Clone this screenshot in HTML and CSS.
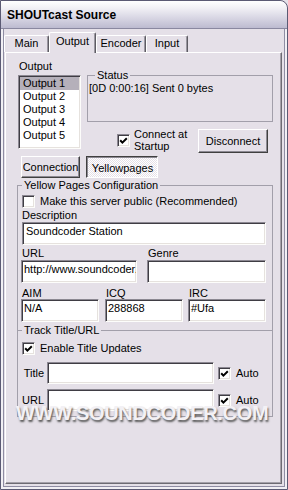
FILE: index.html
```html
<!DOCTYPE html>
<html>
<head>
<meta charset="utf-8">
<link rel="stylesheet" href="styles.css">
</head>
<body>
<div class="window">
  <div class="titlebar">SHOUTcast Source</div>
  <div class="body">
    <div class="tabs">
      <div class="tab t-main">Main</div>
      <div class="tab tab-active t-out">Output</div>
      <div class="tab t-enc">Encoder</div>
      <div class="tab t-in">Input</div>
    </div>
    <div class="panel">
      <div class="top">
        <div class="outcol">
          <div class="lbl">Output</div>
          <div class="list field">
            <div class="item sel">Output 1</div>
            <div class="item">Output 2</div>
            <div class="item">Output 3</div>
            <div class="item">Output 4</div>
            <div class="item">Output 5</div>
          </div>
        </div>
        <div class="rcol">
          <fieldset class="group status">
            <legend>Status</legend>
            <div class="stext">[0D 0:00:16] Sent 0 bytes</div>
          </fieldset>
          <div class="connrow">
            <span class="cb"><svg viewBox="0 0 9 9" width="9" height="9"><polyline points="1.2,4.2 3.4,6.6 7.8,2.2" fill="none" stroke="#000" stroke-width="2"/></svg></span>
            <span class="cbtext">Connect at<br>Startup</span>
            <div class="btn disc">Disconnect</div>
          </div>
        </div>
      </div>
      <div class="subtabs">
        <div class="btn conn">Connection</div>
        <div class="btn pressed yp">Yellowpages</div>
      </div>
      <fieldset class="group ypgroup">
        <legend>Yellow Pages Configuration</legend>
        <div class="ckrow">
          <span class="cb"></span>
          <span class="cklbl">Make this server public (Recommended)</span>
        </div>
        <div class="flbl">Description</div>
        <div class="field fin desc">Soundcoder Station</div>
        <div class="row2">
          <div class="col c-url">
            <div class="clbl">URL</div>
            <div class="field fin">http://www.soundcoder.com</div>
          </div>
          <div class="col c-genre">
            <div class="clbl">Genre</div>
            <div class="field fin"></div>
          </div>
        </div>
        <div class="row3">
          <div class="col c-aim">
            <div class="clbl">AIM</div>
            <div class="field fin">N/A</div>
          </div>
          <div class="col c-icq">
            <div class="clbl">ICQ</div>
            <div class="field fin">288868</div>
          </div>
          <div class="col c-irc">
            <div class="clbl">IRC</div>
            <div class="field fin">#Ufa</div>
          </div>
        </div>
      </fieldset>
      <fieldset class="group track">
        <legend>Track Title/URL</legend>
        <div class="ckrow ck2">
          <span class="cb"><svg viewBox="0 0 9 9" width="9" height="9"><polyline points="1.2,4.2 3.4,6.6 7.8,2.2" fill="none" stroke="#000" stroke-width="2"/></svg></span>
          <span class="cklbl">Enable Title Updates</span>
        </div>
        <div class="trow">
          <span class="tlbl">Title</span>
          <div class="field tin"></div>
          <span class="cb"><svg viewBox="0 0 9 9" width="9" height="9"><polyline points="1.2,4.2 3.4,6.6 7.8,2.2" fill="none" stroke="#000" stroke-width="2"/></svg></span>
          <span class="auto">Auto</span>
        </div>
        <div class="trow trow2">
          <span class="tlbl">URL</span>
          <div class="field tin"></div>
          <span class="cb"><svg viewBox="0 0 9 9" width="9" height="9"><polyline points="1.2,4.2 3.4,6.6 7.8,2.2" fill="none" stroke="#000" stroke-width="2"/></svg></span>
          <span class="auto">Auto</span>
        </div>
      </fieldset>
    </div>
  </div>
  <div class="watermark">WWW.SOUNDCODER.COM</div>
</div>
</body>
</html>
```
FILE: styles.css
```css
html, body {
  margin: 0;
  padding: 0;
  background: #e5e0e8;
}
body {
  font-family: "Liberation Sans", Arial, sans-serif;
  font-size: 11px;
  color: #000;
  overflow: hidden;
}
.window {
  position: relative;
  box-sizing: border-box;
  width: 288px;
  height: 490px;
  border: 1px solid #5b5a74;
  border-top-right-radius: 8px;
  background: #e5e0e8;
  box-shadow: inset 0 0 0 2px #f1eff4, inset 0 0 0 3px #8f8da3;
  overflow: hidden;
}
.titlebar {
  box-sizing: border-box;
  height: 28px;
  border-bottom: 1px solid #8a88a0;
  padding: 2px 0 0 6px;
  line-height: 25px;
  font-weight: bold;
  font-size: 12px;
  background: linear-gradient(#ffffff, #f2f1f6 25%, #dad8e5 60%, #bdbbd0);
  border-top-right-radius: 7px;
}
.body {
  padding: 3px 0 0 3px;
}
.tabs {
  display: flex;
  align-items: flex-end;
  height: 20px;
}
.tab {
  box-sizing: border-box;
  height: 17px;
  border: 1px solid #fff;
  border-bottom: none;
  border-right-color: #5e5c63;
  box-shadow: inset -1px 0 #9a97a0;
  border-radius: 2px 2px 0 0;
  text-align: center;
  line-height: 15px;
}
.tab-active {
  position: relative;
  z-index: 1;
  height: 21px;
  margin-bottom: -1px;
  background: #e5e0e8;
  line-height: 17px;
}
.t-main { width: 45px; }
.t-out { width: 47px; }
.t-enc { width: 50px; }
.t-in { width: 42px; }

.panel {
  box-sizing: border-box;
  margin-left: 1px;
  width: 277px;
  height: 432px;
  border-top: 1px solid #fff;
  border-left: 1px solid #fff;
  border-right: 1px solid #6d6b73;
  border-bottom: 1px solid #6d6b73;
  box-shadow: inset -1px -1px #a5a1aa;
  padding-top: 7px;
}
.top {
  display: flex;
  align-items: flex-start;
}
.outcol {
  margin-left: 12px;
  width: 63px;
}
.lbl {
  height: 12px;
  line-height: 12px;
  padding-left: 1px;
}
.field {
  box-sizing: border-box;
  background: #fff;
  border: 1px solid;
  border-color: #8c8892 #fdfdfb #fdfdfb #8c8892;
  box-shadow: inset 1px 1px #3f3d44, inset -1px -1px #e6e2de;
  white-space: nowrap;
  overflow: hidden;
}
.list {
  margin-top: 3px;
  height: 74px;
  padding: 1px;
}
.item {
  line-height: 13px;
  padding-left: 3px;
}
.sel {
  background: #b5b0ba;
}
.rcol {
  margin-left: 6px;
  margin-top: 9px;
  width: 186px;
}
fieldset.group {
  margin: 0;
  min-width: 0;
  box-sizing: border-box;
  border: 1px solid #a29faa;
}
legend {
  padding: 0 2px;
  line-height: 12px;
}
.status {
  width: 186px;
  padding: 0 0 0 1px;
}
.status legend {
  margin-left: 6px;
}
.stext {
  box-sizing: border-box;
  height: 40px;
  padding-top: 1px;
  line-height: 12px;
}
.cb {
  box-sizing: border-box;
  flex: none;
  display: block;
  width: 13px;
  height: 13px;
  padding: 1px;
  background: #fff;
  border: 1px solid;
  border-color: #8c8892 #fdfdfb #fdfdfb #8c8892;
  box-shadow: inset 1px 1px #3f3d44, inset -1px -1px #e6e2de;
}
.cb svg {
  display: block;
}
.connrow {
  display: flex;
  align-items: flex-start;
  margin-top: 6px;
  padding-right: 5px;
}
.connrow .cb {
  margin-left: 30px;
  margin-top: 6px;
}
.cbtext {
  margin-left: 4px;
  line-height: 12px;
}
.btn {
  box-sizing: border-box;
  display: flex;
  align-items: center;
  justify-content: center;
  border: 1px solid;
  border-color: #fff #404040 #404040 #fff;
  box-shadow: inset -1px -1px #8d8a93;
  background: #e5e0e8;
  white-space: nowrap;
}
.disc {
  margin-left: auto;
  margin-top: 1px;
  width: 70px;
  height: 24px;
}
.subtabs {
  display: flex;
  margin: 3px 0 0 15px;
}
.conn {
  width: 59px;
  height: 22px;
}
.pressed {
  border-color: #404040 #fff #fff #404040;
  box-shadow: inset 1px 1px #8d8a93;
  background: repeating-conic-gradient(#ffffff 0 25%, #e5e0e8 0 50%) 0 0 / 2px 2px;
  padding: 1px 0 0 1px;
}
.yp {
  margin-left: 6px;
  width: 72px;
  height: 22px;
}
.ypgroup {
  margin: 1px 0 -6px 11px !important;
  width: 256px;
  padding: 0 4px 8px;
  border-bottom: none !important;
}
.ckrow {
  display: flex;
  align-items: center;
  height: 13px;
  margin-top: 4px;
}
.cklbl {
  margin-left: 5px;
  line-height: 13px;
}
.flbl {
  margin-top: 1px;
  line-height: 12px;
}
.fin {
  height: 23px;
  margin-top: 1px;
  padding: 2px 3px 0 2px;
  line-height: 13px;
}
.desc {
  width: 244px;
  padding-left: 3px;
}
.row2, .row3 {
  display: flex;
  margin-left: -1px;
}
.row2 { margin-top: 2px; }
.row3 { margin-top: 4px; }
.row3 .fin { margin-top: 0; }
.clbl {
  line-height: 12px;
  padding-left: 1px;
}
.c-url { width: 116px; }
.c-genre { width: 119px; margin-left: 10px; }
.c-aim { width: 78px; }
.c-icq { width: 78px; margin-left: 6px; }
.c-irc { width: 78px; margin-left: 5px; }

.track {
  margin: 0 0 0 11px !important;
  width: 256px;
  padding: 0 4px 5px;
}
.ck2 {
  margin-top: 6px;
}
.trow {
  display: flex;
  align-items: center;
  height: 22px;
  margin-top: 7px;
}
.trow2 {
  margin-top: 5px;
}
.tlbl {
  width: 22px;
  text-align: right;
  flex: none;
}
.tin {
  width: 167px;
  height: 22px;
  margin-left: 3px;
  flex: none;
}
.trow .cb {
  margin-left: 4px;
}
.auto {
  margin-left: 5px;
}
.watermark {
  position: absolute;
  left: 15px;
  top: 402px;
  font: bold 20px/20px "Liberation Sans", Arial, sans-serif;
  letter-spacing: -0.3px;
  color: #f3f1f5;
  text-shadow: 1px 2px 2px #5a5a5a;
  white-space: nowrap;
}
```
